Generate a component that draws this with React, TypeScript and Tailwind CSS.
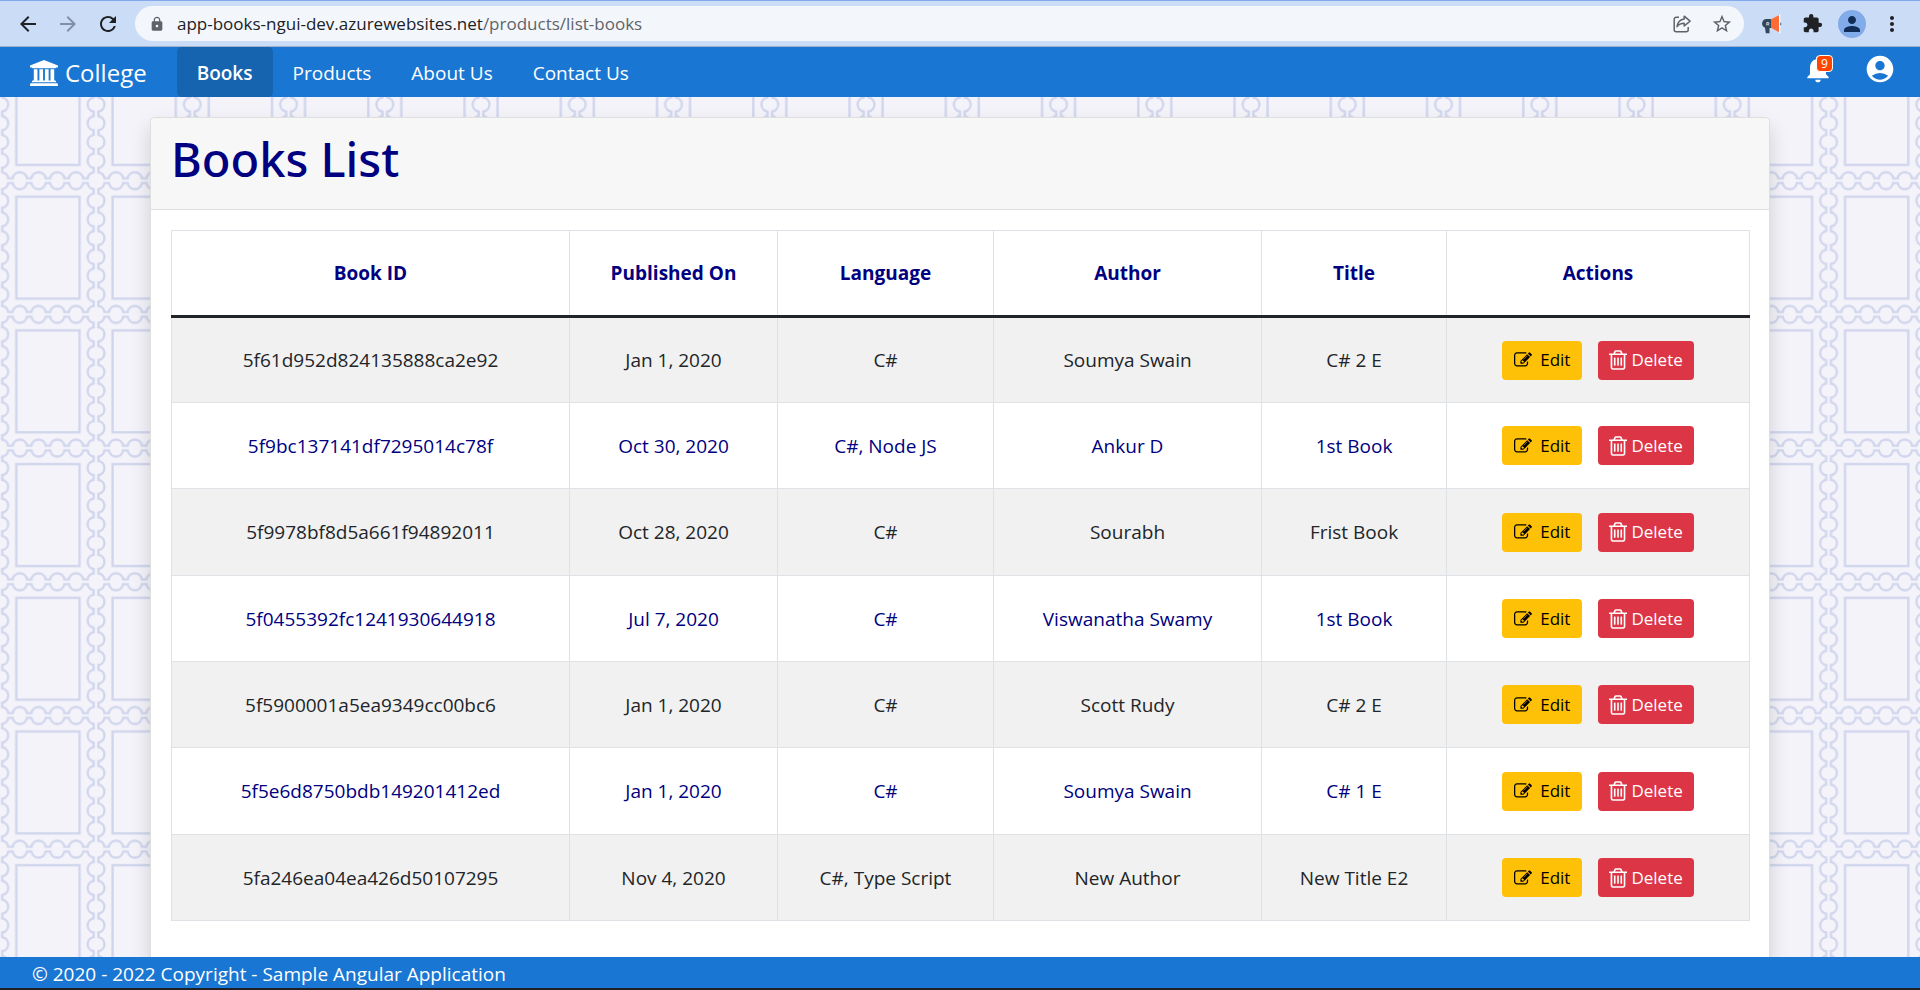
import type { ReactNode } from "react";
import {
  MdAccountCircle,
  MdArrowBack,
  MdArrowForward,
  MdExtension,
  MdLock,
  MdMoreVert,
  MdNotifications,
  MdPerson,
  MdRefresh,
  MdStarBorder,
} from "react-icons/md";

type Book = { id: string; published: string; language: string; author: string; title: string };

const books: Book[] = [
  { id: "5f61d952d824135888ca2e92", published: "Jan 1, 2020", language: "C#", author: "Soumya Swain", title: "C# 2 E" },
  { id: "5f9bc137141df7295014c78f", published: "Oct 30, 2020", language: "C#, Node JS", author: "Ankur D", title: "1st Book" },
  { id: "5f9978bf8d5a661f94892011", published: "Oct 28, 2020", language: "C#", author: "Sourabh", title: "Frist Book" },
  { id: "5f0455392fc1241930644918", published: "Jul 7, 2020", language: "C#", author: "Viswanatha Swamy", title: "1st Book" },
  { id: "5f5900001a5ea9349cc00bc6", published: "Jan 1, 2020", language: "C#", author: "Scott Rudy", title: "C# 2 E" },
  { id: "5f5e6d8750bdb149201412ed", published: "Jan 1, 2020", language: "C#", author: "Soumya Swain", title: "C# 1 E" },
  { id: "5fa246ea04ea426d50107295", published: "Nov 4, 2020", language: "C#, Type Script", author: "New Author", title: "New Title E2" },
];

const headings = ["Book ID", "Published On", "Language", "Author", "Title", "Actions"];
const navLinks = ["Products", "About Us", "Contact Us"];

/* Perforated stamp outline: straight necks joined by semicircular bites. */
const TILE_W = 96.25;
const TILE_H = 133.7;
const EDGE = 2.4;
const PITCH = 18.75;
const CHORD = 14.2;
const RADIUS = 7.2;

function stampPath(): string {
  const corner = 8.4;
  const first = (len: number, n: number) => len / 2 - ((n - 1) * PITCH) / 2;
  const parts: string[] = [`M ${corner} ${EDGE}`];
  const arc = `A ${RADIUS} ${RADIUS} 0 0 0`;
  for (let i = 0; i < 4; i++) {
    const c = first(TILE_W, 4) + i * PITCH;
    parts.push(`H ${c - CHORD / 2} ${arc} ${c + CHORD / 2} ${EDGE}`);
  }
  parts.push(`H ${TILE_W - corner} ${arc} ${TILE_W - EDGE} ${corner}`);
  for (let i = 0; i < 6; i++) {
    const c = first(TILE_H, 6) + i * PITCH;
    parts.push(`V ${c - CHORD / 2} ${arc} ${TILE_W - EDGE} ${c + CHORD / 2}`);
  }
  parts.push(`V ${TILE_H - corner} ${arc} ${TILE_W - corner} ${TILE_H - EDGE}`);
  for (let i = 3; i >= 0; i--) {
    const c = first(TILE_W, 4) + i * PITCH;
    parts.push(`H ${c + CHORD / 2} ${arc} ${c - CHORD / 2} ${TILE_H - EDGE}`);
  }
  parts.push(`H ${corner} ${arc} ${EDGE} ${TILE_H - corner}`);
  for (let i = 5; i >= 0; i--) {
    const c = first(TILE_H, 6) + i * PITCH;
    parts.push(`V ${c + CHORD / 2} ${arc} ${EDGE} ${c - CHORD / 2}`);
  }
  parts.push(`V ${corner} ${arc} ${corner} ${EDGE} Z`);
  return parts.join(" ");
}

function StampBackdrop() {
  return (
    <svg className="absolute inset-0 h-full w-full" aria-hidden="true">
      <defs>
        <pattern id="stamps" width={TILE_W} height={TILE_H} patternUnits="userSpaceOnUse" x="-0.2" y="-50">
          <g fill="none" stroke="#d1d6ed" strokeWidth="2.4">
            <path d={stampPath()} />
            <rect x="16.5" y="16" width={TILE_W - 33} height={TILE_H - 31.8} />
          </g>
        </pattern>
      </defs>
      <rect width="100%" height="100%" fill="url(#stamps)" />
    </svg>
  );
}

function CollegeIcon() {
  return (
    <svg viewBox="0 0 1920 1792" className="h-[26px] w-7" fill="currentColor" aria-hidden="true">
      <path d="M960 0l960 384v128h-128q0 26-20.5 45t-48.5 19h-1526q-28 0-48.5-19t-20.5-45h-128v-128zm-704 640h256v768h128v-768h256v768h128v-768h256v768h128v-768h256v768h59q28 0 48.5 19t20.5 45v64h-1664v-64q0-26 20.5-45t48.5-19h59v-768zm1595 960q28 0 48.5 19t20.5 45v128h-1920v-128q0-26 20.5-45t48.5-19h1782z" />
    </svg>
  );
}

function EditIcon() {
  return (
    <svg viewBox="0 0 1792 1792" className="size-[18px]" fill="currentColor" aria-hidden="true">
      <path d="M888 1184l116-116-152-152-116 116v56h96v96h56zm440-720q-16-16-33 1l-350 350q-17 17-1 33t33-1l350-350q17-17 1-33zm80 594v190q0 119-84.5 203.5t-203.5 84.5h-832q-119 0-203.5-84.5t-84.5-203.5v-832q0-119 84.5-203.5t203.5-84.5h832q63 0 117 25 15 7 18 23 3 17-9 29l-49 49q-14 14-32 8-23-6-45-6h-832q-66 0-113 47t-47 113v832q0 66 47 113t113 47h832q66 0 113-47t47-113v-126q0-13 9-22l64-64q15-15 35-7t20 29zm-96-738l288 288-672 672h-288v-288zm444 132l-92 92-288-288 92-92q28-28 68-28t68 28l152 152q28 28 28 68t-28 68z" />
    </svg>
  );
}

function TrashIcon() {
  return (
    <svg viewBox="192 128 1408 1536" className="h-5 w-[18px]" fill="currentColor" aria-hidden="true">
      <path d="M704 736v576q0 14-9 23t-23 9h-64q-14 0-23-9t-9-23v-576q0-14 9-23t23-9h64q14 0 23 9t9 23zm256 0v576q0 14-9 23t-23 9h-64q-14 0-23-9t-9-23v-576q0-14 9-23t23-9h64q14 0 23 9t9 23zm256 0v576q0 14-9 23t-23 9h-64q-14 0-23-9t-9-23v-576q0-14 9-23t23-9h64q14 0 23 9t9 23zm128 724v-948h-896v948q0 22 7 40.5t14.5 27 10.5 8.5h832q3 0 10.5-8.5t14.5-27 7-40.5zm-672-1076h448l-48-117q-7-9-17-11h-317q-10 2-17 11zm928 32v64q0 14-9 23t-23 9h-96v948q0 83-47 143.5t-113 60.5h-832q-66 0-113-58.5t-47-141.5v-952h-96q-14 0-23-9t-9-23v-64q0-14 9-23t23-9h309l70-167q15-37 54-63t79-26h320q40 0 79 26t54 63l70 167h309q14 0 23 9t9 23z" />
    </svg>
  );
}

function ShareIcon() {
  return (
    <svg viewBox="0 0 20 20" className="size-5" fill="none" stroke="#5f6368" strokeWidth="1.5" strokeLinejoin="round" aria-hidden="true">
      <path d="M7 3.2H4.2a2 2 0 0 0-2 2v10.600a2 2 0 0 0 2 2h10a2 2 0 0 0 2-2V13" />
      <path d="M12.200 2.200l5.900 4.900-5.900 4.900V9.200c-3.400 0-5.500 1-7.200 3.400.6-3.900 3-7 7.200-7.500z" />
    </svg>
  );
}

function MegaphoneIcon() {
  return (
    <svg viewBox="0 0 20 20" className="size-5" aria-hidden="true">
      <path d="M4.500 5H9v9H7.500v5.200H3.800L3 13.700A4.500 4.500 0 0 1 4.500 5z" fill="#33475b" />
      <path d="M9 5.300l8-4v17l-8-4.500z" fill="#ff6b35" />
      <path d="M17 .8h1.300v18.400H17z" fill="#fff" />
      <path d="M18.300 8.500a1.600 1.600 0 0 1 0 3z" fill="#33475b" />
      <path d="M4.800 11.500v-3h1.400a.8.800 0 0 1 0 1.700H4.800m1.300 0l.9 1.300" fill="none" stroke="#fff" strokeWidth=".7" />
    </svg>
  );
}

function ToolButton({ label, children }: { label: string; children: ReactNode }) {
  return (
    <button type="button" aria-label={label} className="flex w-10 items-center justify-center">
      {children}
    </button>
  );
}

function BrowserBar() {
  return (
    <div className="flex h-[47px] shrink-0 items-center border-t border-b border-t-[#84a9ea] border-b-[#9eb0cc] bg-[#cbdcf7] pr-2 pl-2 text-[#202124]">
      <ToolButton label="Back">
        <MdArrowBack className="size-6" />
      </ToolButton>
      <ToolButton label="Forward">
        <MdArrowForward className="size-6 text-[#8090a8]" />
      </ToolButton>
      <ToolButton label="Reload">
        <MdRefresh className="size-6" />
      </ToolButton>
      <div className="ml-[7px] flex h-[35px] flex-1 items-center rounded-full bg-[#f3f7fc] pr-0.5 pl-3.5">
        <MdLock className="size-4 text-[#5f6368]" />
        <a href="#" className="ml-3 flex-1 text-[17px] text-[#5f6368]">
          <span className="text-[#202124]">app-books-ngui-dev.azurewebsites.net</span>/products/list-books
        </a>
        <ToolButton label="Share">
          <ShareIcon />
        </ToolButton>
        <ToolButton label="Bookmark">
          <MdStarBorder className="size-[22px] text-[#5f6368]" />
        </ToolButton>
      </div>
      <div className="flex pl-2">
        <ToolButton label="Announcements">
          <MegaphoneIcon />
        </ToolButton>
        <ToolButton label="Extensions">
          <MdExtension className="size-[21px]" />
        </ToolButton>
        <ToolButton label="Profile">
          <span className="flex size-7 items-center justify-center rounded-full bg-[#82abea]">
            <MdPerson className="size-6 text-[#0f2d57]" />
          </span>
        </ToolButton>
        <ToolButton label="Menu">
          <MdMoreVert className="size-6" />
        </ToolButton>
      </div>
    </div>
  );
}

function NavBar() {
  return (
    <nav className="flex h-[50px] shrink-0 items-stretch bg-[#1976d2] text-[19px] text-white">
      <a href="#" className="mr-[30px] ml-[30px] flex items-center gap-[7px] pt-0.5 text-[24px]">
        <CollegeIcon />
        College
      </a>
      <a href="#" className="flex items-center rounded-[5px] bg-[#1663b0] px-5 pt-0.5 font-semibold">
        Books
      </a>
      {navLinks.map((link) => (
        <a key={link} href="#" className="flex items-center px-5 pt-0.5">
          {link}
        </a>
      ))}
      <div className="ml-auto flex items-center gap-[30px] pr-6 pb-1.5">
        <button type="button" aria-label="Notifications" className="relative">
          <MdNotifications className="size-8" />
          <span className="absolute top-0.5 left-3.5 flex h-[17px] w-[17px] items-center justify-center rounded-sm border border-white bg-[#ff4500] text-[12px] leading-none">
            9
          </span>
        </button>
        <button type="button" aria-label="Account">
          <MdAccountCircle className="size-8" />
        </button>
      </div>
    </nav>
  );
}

function BooksTable() {
  return (
    <table className="w-full table-fixed border-collapse text-center text-[19px] leading-[30px]">
      <colgroup>
        <col className="w-[398px]" />
        <col className="w-[208px]" />
        <col className="w-[216px]" />
        <col className="w-[268px]" />
        <col className="w-[185px]" />
        <col className="w-[303px]" />
      </colgroup>
      <thead>
        <tr className="h-[86px] border-b-3 border-[#212529] text-[#000080]">
          {headings.map((heading) => (
            <th key={heading} scope="col" className="border-x border-t border-x-[#dee2e6] border-t-[#dee2e6] font-bold">
              {heading}
            </th>
          ))}
        </tr>
      </thead>
      <tbody>
        {books.map((book) => (
          <tr key={book.id} className="h-[86px] odd:bg-[#f1f1f1] odd:text-[#212529] even:text-[#000080] nth-[3n]:h-[87px]">
            {[book.id, book.published, book.language, book.author, book.title].map((value, i) => (
              <td key={i} className="border-x border-b border-[#dee2e6]">
                {value}
              </td>
            ))}
            <td className="border-x border-b border-[#dee2e6]">
              <div className="flex justify-center gap-4 text-[17px]">
                <button type="button" className="flex h-[39px] items-center gap-2 rounded bg-[#ffc107] px-3 text-black">
                  <EditIcon />
                  Edit
                </button>
                <button type="button" className="flex h-[39px] items-center gap-1 rounded bg-[#dc3545] px-[11px] text-white">
                  <TrashIcon />
                  Delete
                </button>
              </div>
            </td>
          </tr>
        ))}
      </tbody>
    </table>
  );
}

export default function App() {
  return (
    <div className="flex h-screen flex-col bg-[#f4f3fa] font-['Open_Sans','Noto_Sans',sans-serif]">
      <BrowserBar />
      <NavBar />
      <main className="relative min-h-0 flex-1 overflow-hidden">
        <StampBackdrop />
        <div className="relative mx-auto mt-5 w-full max-w-[1620px]">
          <section className="rounded-[5px] border border-[#dfdfdf] bg-white shadow-[0_10px_20px_rgba(0,0,0,0.15)]">
            <header className="rounded-t-[5px] border-b border-[#dfdfdf] bg-[#f7f7f7] px-5 pt-[11px] pb-5">
              <h1 className="font-['Noto_Sans','Open_Sans',sans-serif] text-[47px] leading-[60px] font-medium text-[#000080]">
                Books List
              </h1>
            </header>
            <div className="px-5 pt-5 pb-10">
              <BooksTable />
            </div>
          </section>
        </div>
      </main>
      <footer className="h-[31px] shrink-0 bg-[#1976d2] pl-8 text-[19px] leading-[34px] text-white">
        © 2020 - 2022 Copyright - Sample Angular Application
      </footer>
      <div className="h-0.5 shrink-0 bg-[#1f2023]" />
    </div>
  );
}
